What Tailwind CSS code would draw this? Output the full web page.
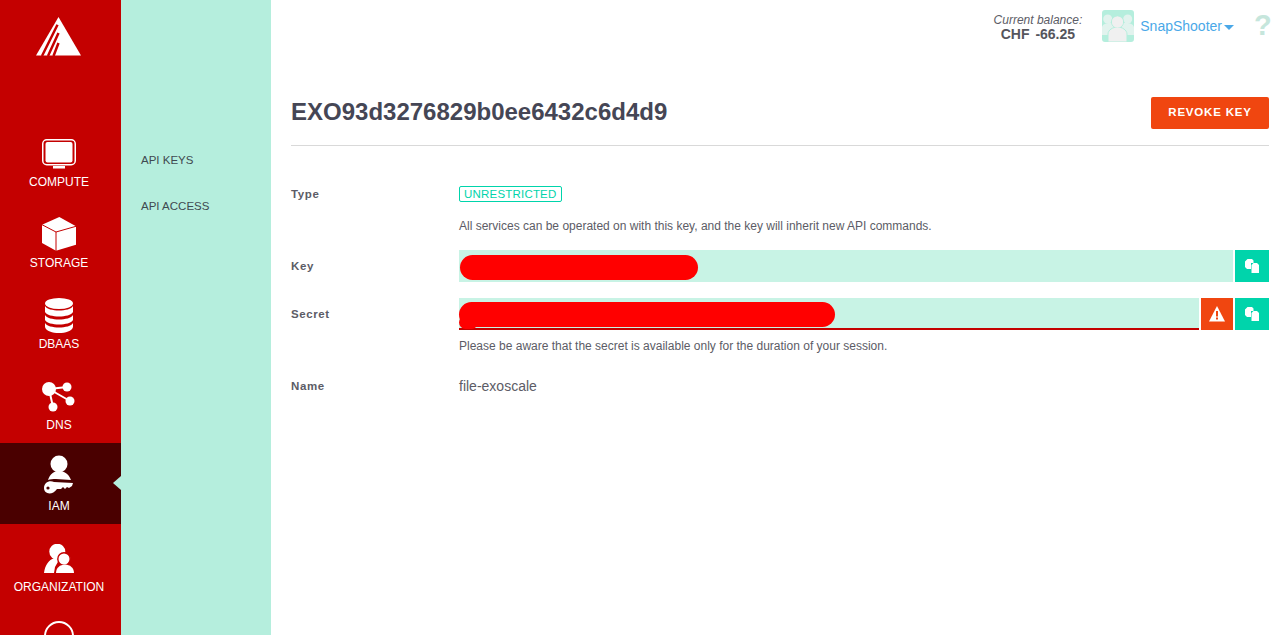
<!DOCTYPE html>
<html lang="en">
  <head>
    <meta charset="UTF-8" />
    <title>API key</title>
    <script src="https://cdn.jsdelivr.net/npm/@tailwindcss/browser@4"></script>
  </head>
  <body class="h-[635px] overflow-hidden bg-white font-['Liberation_Sans',Arial,sans-serif] text-[#5c5c66]">
    <div class="flex h-[635px] overflow-hidden">
      <!-- Main nav -->
      <nav class="w-[121px] shrink-0 bg-[#c40000] pr-[3px] text-center text-[12px] leading-[14px] text-white">
        <div class="flex h-[119px] items-start justify-center pt-[17px]">
          <svg width="46" height="40" viewBox="0 0 46 40">
            <path d="M22.500 0 L45 38.500 H0 Z" fill="#fff" />
            <path d="M21.500 7.700 L6 39 M22.500 16 L12 39 M22.500 26 L17.500 39" stroke="#c40000" stroke-width="2.500" fill="none" />
          </svg>
        </div>
        <a class="flex h-[81px] flex-col items-center pt-[20px]">
          <svg width="34" height="30" viewBox="0 0 34 30">
            <rect x="0.750" y="0.750" width="32.500" height="25" rx="4" fill="none" stroke="#fff" stroke-width="1.500" />
            <rect x="3.500" y="3" width="27" height="20.500" rx="2" fill="#fff" />
            <rect x="11" y="27" width="12" height="2.500" fill="#fff" />
          </svg>
          <span class="mt-[6px]">COMPUTE</span>
        </a>
        <a class="flex h-[81px] flex-col items-center pt-[17px]">
          <svg width="34" height="34" viewBox="0 0 34 34">
            <path d="M17.300 0 L34 9.300 V27.700 L14 33.800 L0 26 V7.700 Z" fill="#fff" />
            <path d="M0 7.700 L14 15 L34 9.300 M14 15 V34" stroke="#c40000" stroke-width="1" fill="none" />
          </svg>
          <span class="mt-[5px]">STORAGE</span>
        </a>
        <a class="flex h-[81px] flex-col items-center pt-[17px]">
          <svg width="28" height="35" viewBox="0 0 28 35">
            <ellipse cx="14" cy="5.500" rx="14" ry="5.500" fill="#fff" />
            <path d="M0 8 C3 14 25 14 28 8 V14 C25 20 3 20 0 14 Z" fill="#fff" />
            <path d="M0 17 C3 23 25 23 28 17 V22 C25 28 3 28 0 22 Z" fill="#fff" />
            <path d="M0 25 C3 31 25 31 28 25 V29 C26 37 2 37 0 29 Z" fill="#fff" />
          </svg>
          <span class="mt-[4px]">DBAAS</span>
        </a>
        <a class="flex h-[81px] flex-col items-center pt-[20px]">
          <svg width="34" height="30" viewBox="0 0 34 30">
            <path d="M7 7 L25 5 M7 7 L28 19 M7 7 L11 25" stroke="#fff" stroke-width="2" fill="none" />
            <circle cx="7" cy="7" r="7" fill="#fff" />
            <circle cx="25" cy="5" r="4.500" fill="#fff" />
            <circle cx="28" cy="19" r="4.500" fill="#fff" />
            <circle cx="11" cy="25" r="4.500" fill="#fff" />
          </svg>
          <span class="mt-[6px]">DNS</span>
        </a>
        <a class="relative -mr-[3px] flex h-[81px] flex-col items-center bg-[#4a0000] pr-[3px] pt-[12px]">
          <svg width="30" height="40" viewBox="0 0 30 40">
            <circle cx="15" cy="9" r="8.500" fill="#fff" />
            <path d="M4 25 C6 19 10 16 15 16 C20 16 25 19 27 25 L12 24 C9 24 6 24 4 25 Z" fill="#fff" />
            <path d="M0 33 C0 28 5 25 10 27 L29 28 L28 31 L25 33 L23 32 L21 34 L19 32 L17 34 H13 C8 41 0 39 0 33 Z" fill="#fff" />
            <circle cx="4" cy="33" r="1.600" fill="#4a0000" />
          </svg>
          <span class="mt-[4px]">IAM</span>
          <span class="absolute right-0 top-[33px] border-y-[7px] border-r-[8px] border-y-transparent border-r-[#b5eedd]"></span>
        </a>
        <a class="flex h-[81px] flex-col items-center pt-[20px]">
          <svg width="30" height="30" viewBox="0 0 30 30">
            <circle cx="13.300" cy="7.700" r="8" fill="#fff" />
            <path d="M0 29 C1 21 5 16 10 14 L15 16 L11 23 L10 29 Z" fill="#fff" />
            <circle cx="20" cy="15" r="6.200" fill="#fff" stroke="#c40000" stroke-width="1.400" />
            <path d="M12 29 C12 24 16 20.500 21 20.500 C26 20.500 30 24 30 29 Z" fill="#fff" />
          </svg>
          <span class="mt-[6px]">ORGANIZATION</span>
        </a>
        <div class="flex justify-center pt-[16px]">
          <svg width="30" height="30" viewBox="0 0 30 30"><circle cx="15" cy="15" r="14" fill="none" stroke="#fff" stroke-width="2" /></svg>
        </div>
      </nav>

      <!-- Sub nav -->
      <aside class="w-[150px] shrink-0 bg-[#b5eedd] pl-[20px] pt-[153px] text-[11.5px] leading-[14px] text-[#3f4a50]">
        <a class="block">API KEYS</a>
        <a class="mt-[32px] block">API ACCESS</a>
      </aside>

      <!-- Content -->
      <main class="flex-1 pl-[20px] pr-[17px]">
        <div class="flex h-[51px] items-start justify-end">
          <div class="mr-[20px] mt-[13px] text-center">
            <div class="text-[12px] italic leading-[14px]">Current balance:</div>
            <div class="text-[14px] font-bold leading-[14px] text-[#55555c] [word-spacing:2px]">CHF -66.25</div>
          </div>
          <svg class="mt-[10px] rounded-[3px]" width="32" height="32" viewBox="0 0 32 32">
            <rect width="32" height="32" fill="#b5eedd" />
            <circle cx="5.700" cy="9" r="4.500" fill="#e2f3ee" />
            <circle cx="25.700" cy="9" r="4.500" fill="#e2f3ee" />
            <path d="M0 25 V17 C1 14 4 13 8 13 H12 V25 Z M32 25 V17 C31 14 28 13 24 13 H20 V25 Z" fill="#e2f3ee" />
            <circle cx="15.500" cy="12" r="6" stroke="#b5eedd" stroke-width="1" fill="#f0f0f0" />
            <path d="M6 32 V24 C6 20 11 17 15.500 17 C20 17 25 20 25 24 V32 Z" stroke="#b5eedd" stroke-width="1" fill="#f0f0f0" />
            <circle cx="15.500" cy="12" r="5.500" fill="#f0f0f0" />
          </svg>
          <span class="ml-[6px] mt-[18px] text-[14px] leading-[16px] text-[#4aa8e8]">SnapShooter</span>
          <span class="ml-[2px] mt-[25px] border-x-[5px] border-t-[5px] border-x-transparent border-t-[#4aa8e8]"></span>
          <span class="ml-[20px] mt-[10px] w-[15px] text-[29px] font-bold leading-[30px] text-[#c6e6dc]">?</span>
        </div>

        <div class="flex h-[95px] items-start justify-between border-b border-[#d9d9d9] pt-[46px]">
          <h1 class="mt-[1px] text-[24px] font-bold leading-[28px] text-[#454655]">EXO93d3276829b0ee6432c6d4d9</h1>
          <button class="h-[32px] w-[118px] rounded-[2px] bg-[#f04610] text-[11.5px] font-bold tracking-[0.8px] text-white">REVOKE KEY</button>
        </div>

        <div class="grid grid-cols-[168px_1fr] text-[12px] leading-[14px]">
          <div class="pt-[41px] text-[11.5px] font-bold tracking-[0.6px]">Type</div>
          <div class="pt-[40px]">
            <span class="block w-fit rounded-[2px] border border-[#00d4ab] px-[4px] text-[11.5px] leading-[14px] tracking-[0.2px] text-[#00d4ab]">UNRESTRICTED</span>
            <p class="mt-[17px]">All services can be operated on with this key, and the key will inherit new API commands.</p>
          </div>

          <div class="pt-[26px] text-[11.5px] font-bold tracking-[0.6px]">Key</div>
          <div class="flex gap-[2px] pt-[17px]">
            <div class="relative h-[32px] flex-1 bg-[#c8f3e5]">
              <span class="absolute left-px top-[5px] h-[25px] w-[238px] rounded-full bg-[#ff0000]"></span>
            </div>
            <button class="flex h-[32px] w-[34px] items-center justify-center bg-[#00d4ab]">
              <svg width="14" height="14" viewBox="0 0 14 14">
                <path d="M2.500 0 H7 L8.500 1.500 V4 H6 V10 H2 L0 8 V2.500 Z" fill="#fff" />
                <path d="M8.500 4 H12 L14 6 V14 H6.500 V6 Z" fill="#fff" />
              </svg>
            </button>
          </div>

          <div class="pt-[25px] text-[11.5px] font-bold tracking-[0.6px]">Secret</div>
          <div class="pt-[16px]">
            <div class="flex gap-[2px]">
              <div class="relative h-[32px] flex-1 border-b-2 border-[#c40000] bg-[#c8f3e5]">
                <span class="absolute left-0 top-[4px] h-[25px] w-[376px] rounded-full bg-[#ff0000]"></span>
                <span class="absolute left-0 top-[18px] h-[13px] w-[19px] rounded-full bg-[#ff0000]"></span>
              </div>
              <button class="flex h-[32px] w-[32px] items-center justify-center bg-[#f04610]">
                <svg width="16" height="16" viewBox="0 0 16 16">
                  <path d="M8 0 L16 15.500 H0 Z" fill="#fff" />
                  <rect x="7" y="5" width="2" height="5.500" fill="#f04610" />
                  <rect x="7" y="11.500" width="2" height="2" fill="#f04610" />
                </svg>
              </button>
              <button class="flex h-[32px] w-[34px] items-center justify-center bg-[#00d4ab]">
                <svg width="14" height="14" viewBox="0 0 14 14">
                  <path d="M2.500 0 H7 L8.500 1.500 V4 H6 V10 H2 L0 8 V2.500 Z" fill="#fff" />
                  <path d="M8.500 4 H12 L14 6 V14 H6.500 V6 Z" fill="#fff" />
                </svg>
              </button>
            </div>
            <p class="mt-[9px]">Please be aware that the secret is available only for the duration of your session.</p>
          </div>

          <div class="pt-[26px] text-[11.5px] font-bold tracking-[0.6px]">Name</div>
          <div class="pt-[25px] text-[14px] leading-[16px]">file-exoscale</div>
        </div>
      </main>
    </div>
  </body>
</html>
